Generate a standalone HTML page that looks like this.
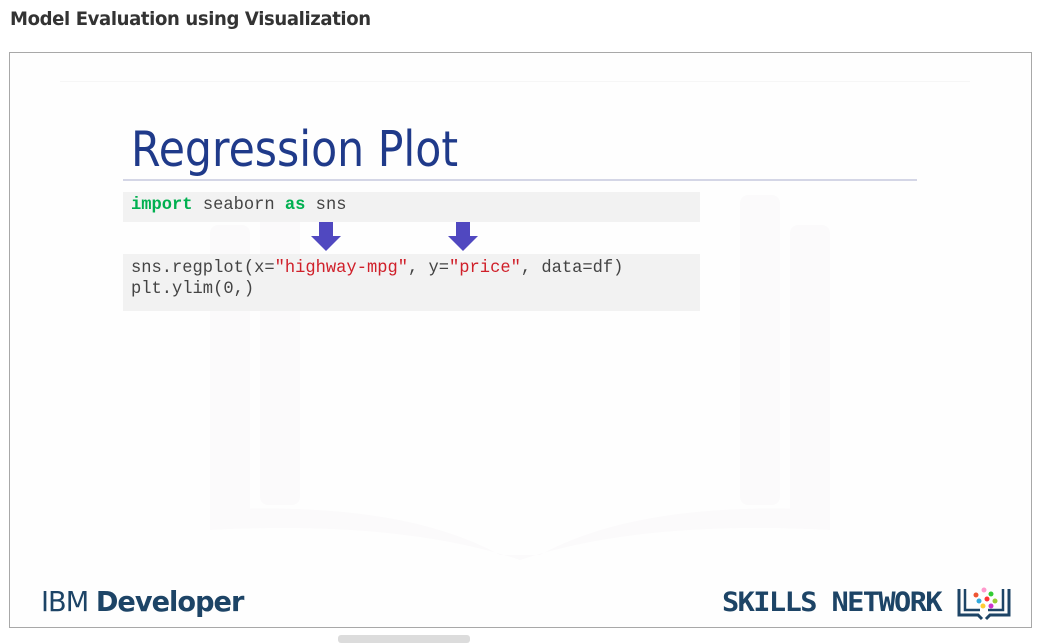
<!DOCTYPE html>
<html><head><style>
body{margin:0;width:1045px;height:641px;background:#fff;position:relative;overflow:hidden;font-family:"Liberation Sans",sans-serif}
.a{position:absolute}
.code{position:absolute;left:123px;width:577px;background:#f2f2f2;font-family:"Liberation Mono",monospace;font-size:17.1px;color:#444;line-height:21px;box-sizing:border-box;padding-left:8px;white-space:pre}
.k{color:#00b050;font-weight:bold}.s{color:#d0202a}
</style></head><body>
<div class="a" style="left:10px;top:8px;font-size:19px;font-weight:bold;color:#333;font-family:'DejaVu Sans',sans-serif;letter-spacing:-0.4px;transform:scaleX(0.95);transform-origin:left">Model Evaluation using Visualization</div>
<div class="a" style="left:9px;top:52px;width:1021px;height:574px;border:1px solid #a8a8a8;background:#fefefe"></div>
<div class="a" style="left:60px;top:81px;width:910px;height:1px;background:#f6f6f6"></div>
<svg class="a" style="left:200px;top:170px" width="640" height="390">
<g fill="#fbfafb"><rect x="10" y="55" width="40" height="300" rx="8"/><rect x="590" y="55" width="40" height="300" rx="8"/><rect x="60" y="25" width="40" height="310" rx="8"/><rect x="540" y="25" width="40" height="310" rx="8"/>
<path d="M10 340 Q200 330 300 385 L340 385 Q440 330 630 340 L630 360 Q440 350 320 390 Q200 350 10 360Z"/></g>
</svg>
<div class="a" style="left:131px;top:121px;font-size:49px;color:#1f3a8a;font-family:'DejaVu Sans',sans-serif;transform:scaleX(0.87);transform-origin:left">Regression Plot</div>
<div class="a" style="left:123px;top:179px;width:794px;height:2px;background:#d4d6e6"></div>
<div class="code" style="top:192px;height:30px;padding-top:3px"><span class="k">import</span> seaborn <span class="k">as</span> sns</div>
<svg class="a" style="left:311px;top:222px" width="32" height="30"><path d="M8 0H22V14H30L15 29L0 14H8Z" fill="#5048c0"/></svg>
<svg class="a" style="left:448px;top:222px" width="32" height="30"><path d="M8 0H22V14H30L15 29L0 14H8Z" fill="#5048c0"/></svg>
<div class="code" style="top:254px;height:57px;padding-top:4px">sns.regplot(x=<span class="s">"highway-mpg"</span>, y=<span class="s">"price"</span>, data=df)
plt.ylim(0,)</div>
<div class="a" style="left:41px;top:585px;font-size:28px;color:#1d4466;font-family:'DejaVu Sans',sans-serif;letter-spacing:-1px;transform:scaleX(0.97);transform-origin:left">IBM <b>Developer</b></div>
<div class="a" style="left:722px;top:587px;font-size:27px;color:#1d4466;font-weight:bold;font-family:'DejaVu Sans Mono',monospace;letter-spacing:-1.5px;transform:scaleX(1.06);transform-origin:left">SKILLS NETWORK</div>
<svg class="a" style="left:956px;top:585px" width="56" height="36">
<path d="M3 4V30H22L26 34M53 4V30H34L30 34" fill="none" stroke="#1d4466" stroke-width="3"/>
<path d="M9 4V25H24M47 4V25H32" fill="none" stroke="#1d4466" stroke-width="2.5"/>
<g><circle cx="20" cy="10" r="2.5" fill="#e53"/><circle cx="28" cy="5" r="2.5" fill="#f9c"/><circle cx="35" cy="9" r="2.5" fill="#3c3"/><circle cx="23" cy="16" r="2.5" fill="#3ad"/><circle cx="31" cy="14" r="2.5" fill="#f33"/><circle cx="39" cy="16" r="2.5" fill="#9c3"/><circle cx="27" cy="21" r="2.5" fill="#fc3"/><circle cx="35" cy="21" r="2.5" fill="#c3c"/></g>
</svg>
<div class="a" style="left:338px;top:635px;width:132px;height:8px;background:#dcdcdc;border-radius:3px"></div>
</body></html>
